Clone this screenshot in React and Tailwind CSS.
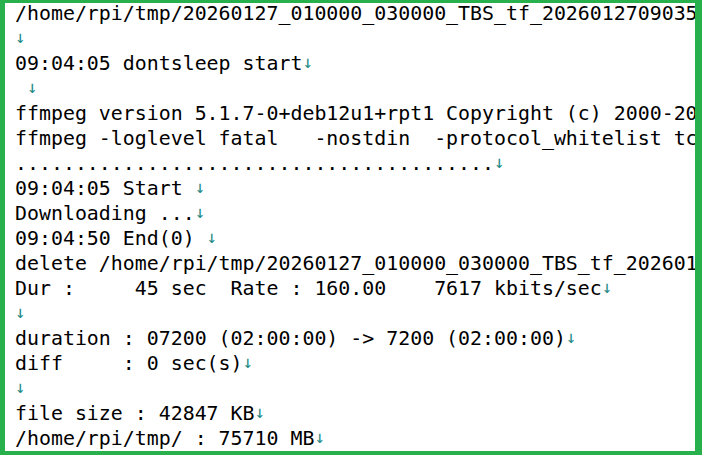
import React from "react";

const Arrow = () => (
  <span className="text-[17px] leading-none align-[2px] text-[#1e8a86]">↓</span>
);

const lines = [
  { t: "/home/rpi/tmp/20260127_010000_030000_TBS_tf_20260127090357.aac", a: false },
  { t: "", a: true },
  { t: "09:04:05 dontsleep start", a: true },
  { t: " ", a: true },
  { t: "ffmpeg version 5.1.7-0+deb12u1+rpt1 Copyright (c) 2000-2025 the FFmpeg developers", a: false },
  { t: "ffmpeg -loglevel fatal   -nostdin  -protocol_whitelist tcp,http,https,tls -i", a: false },
  { t: "........................................", a: true },
  { t: "09:04:05 Start ", a: true },
  { t: "Downloading ...", a: true },
  { t: "09:04:50 End(0) ", a: true },
  { t: "delete /home/rpi/tmp/20260127_010000_030000_TBS_tf_20260127090357.aac", a: false },
  { t: "Dur :     45 sec  Rate : 160.00    7617 kbits/sec", a: true },
  { t: "", a: true },
  { t: "duration : 07200 (02:00:00) -> 7200 (02:00:00)", a: true },
  { t: "diff     : 0 sec(s)", a: true },
  { t: "", a: true },
  { t: "file size : 42847 KB", a: true },
  { t: "/home/rpi/tmp/ : 75710 MB", a: true },
];

export default function App() {
  return (
    <div className="w-[702px] h-[457px] bg-white overflow-hidden">
      <div className="w-[702px] h-[455px] border-l-[5px] border-t-[3px] border-r-[7px] border-b-[4px] border-[#27b04c] bg-white overflow-hidden">
        <div
          className="-mt-[2px] pl-[10px] text-[19.9px] leading-[25px] text-black whitespace-pre"
          style={{ fontFamily: '"DejaVu Sans Mono", monospace' }}
        >
          {lines.map((l, i) => (
            <div key={i} className="h-[25px] leading-[25px] whitespace-pre overflow-hidden">
              {l.t}
              {l.a && <Arrow />}
            </div>
          ))}
        </div>
      </div>
    </div>
  );
}
